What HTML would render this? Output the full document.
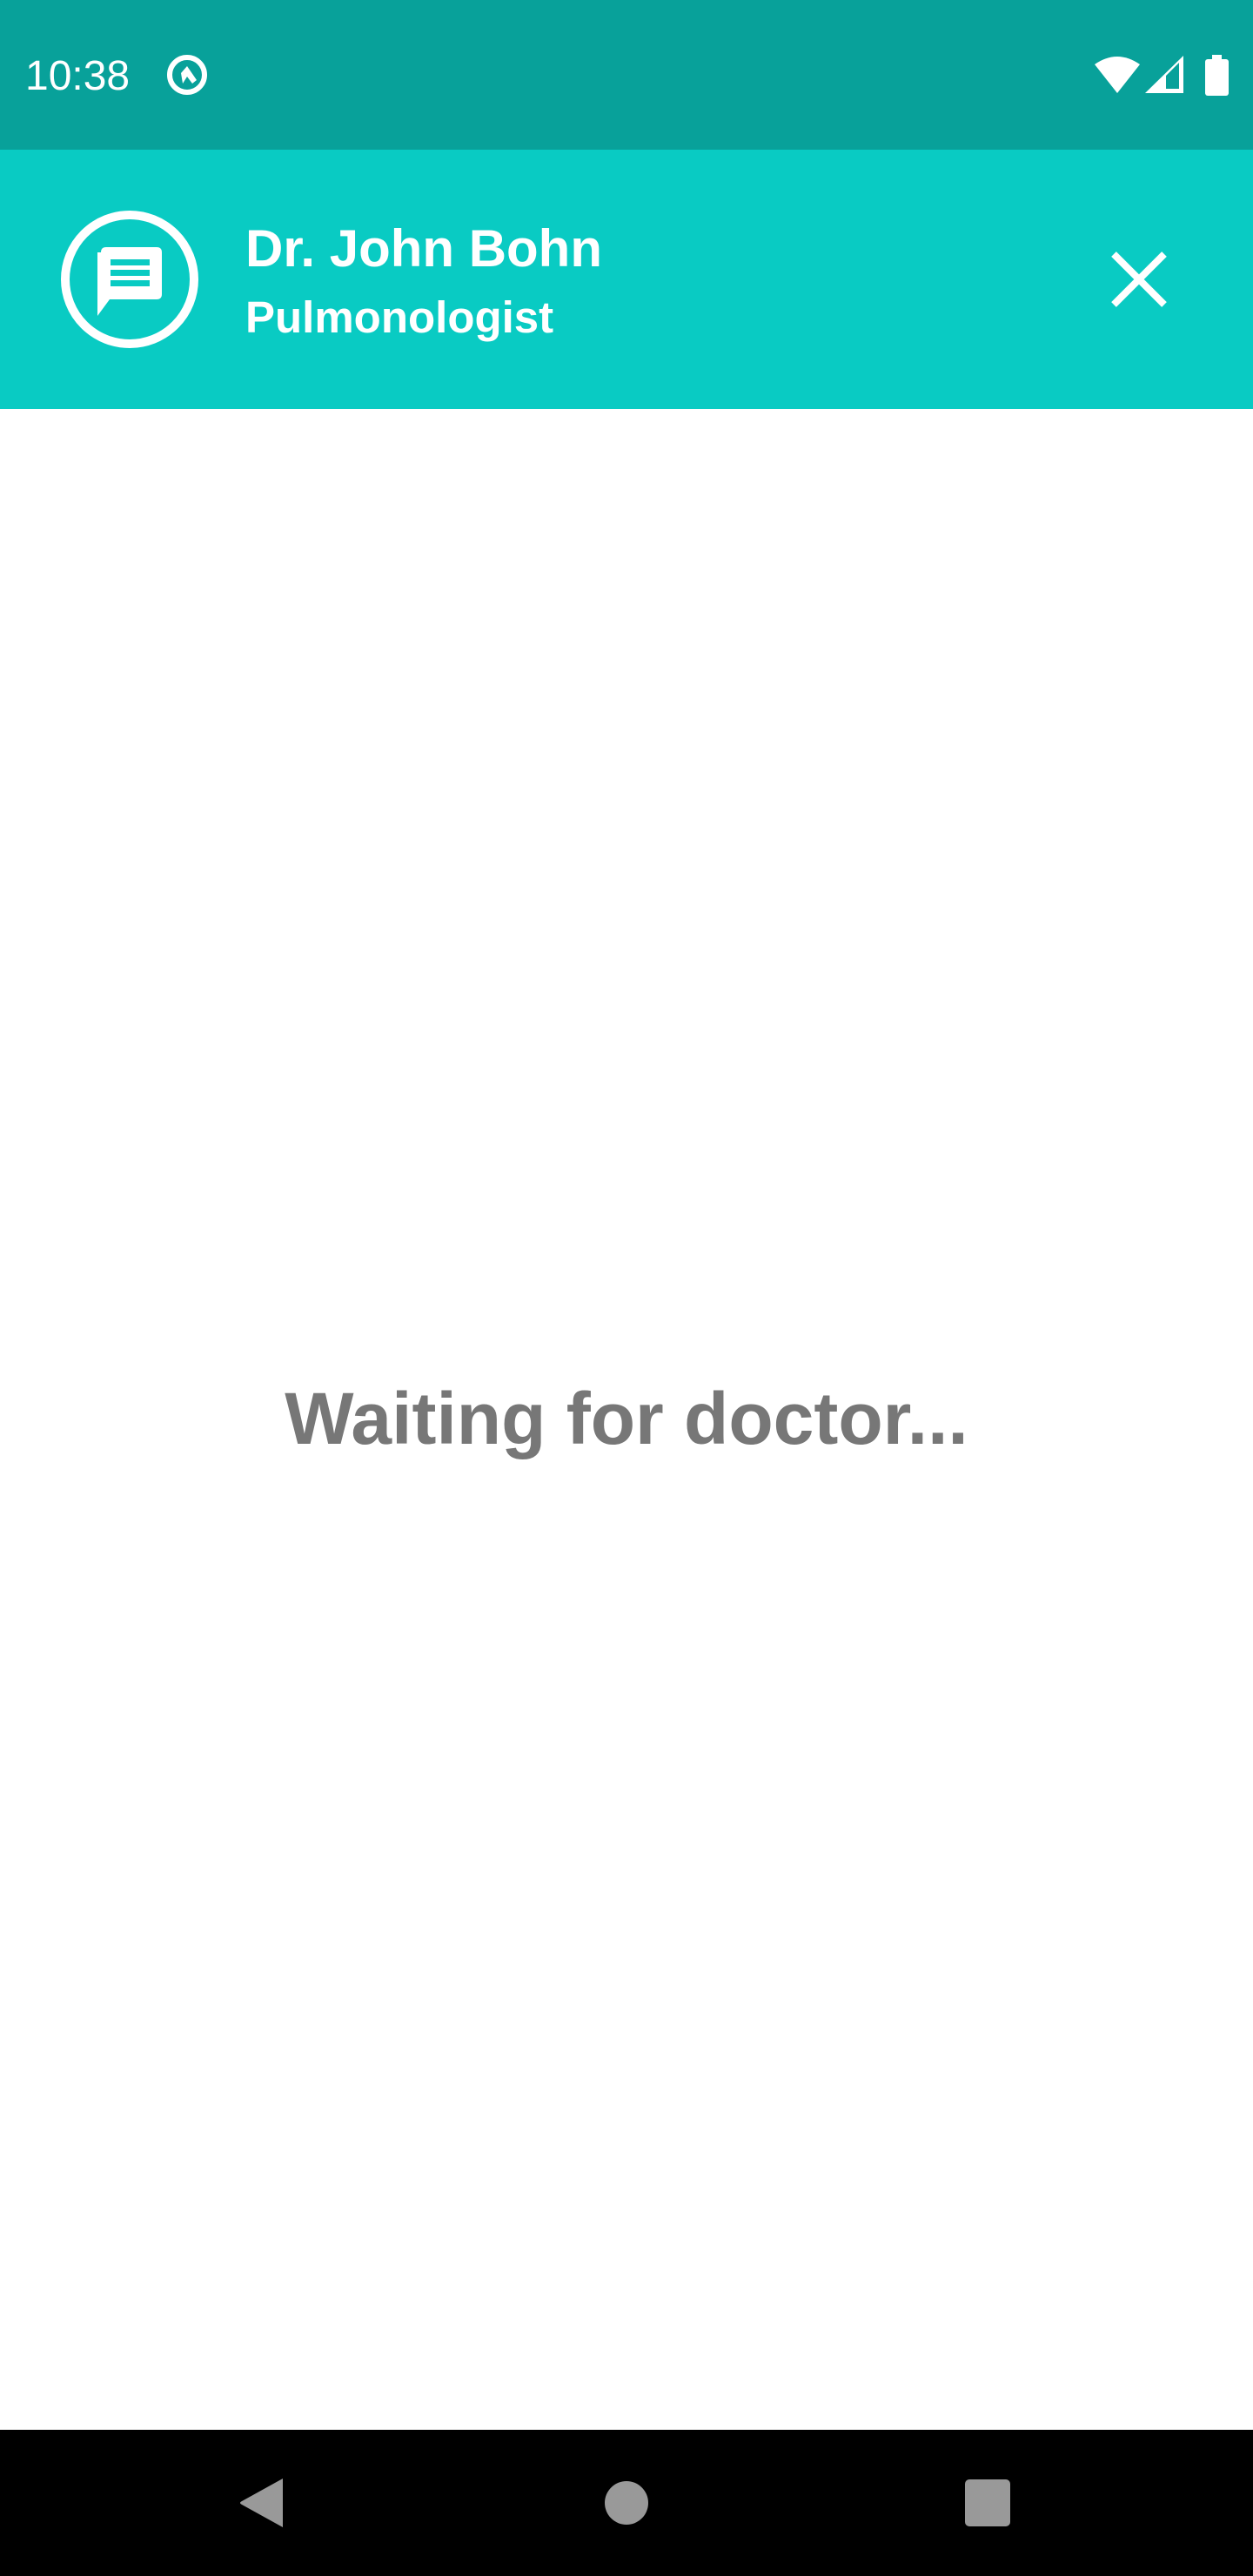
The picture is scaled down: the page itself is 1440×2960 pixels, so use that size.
<!DOCTYPE html>
<html><head><meta charset="utf-8"><style>
html,body{margin:0;padding:0;}
body{width:1440px;height:2960px;position:relative;background:#fff;font-family:"Liberation Sans",sans-serif;overflow:hidden;}
.sb{position:absolute;left:0;top:0;width:1440px;height:172px;background:#08a19a;}
.hd{position:absolute;left:0;top:172px;width:1440px;height:298px;background:#09cbc3;}
.nav{position:absolute;left:0;top:2792px;width:1440px;height:168px;background:#000;}
.t{position:absolute;color:#fff;white-space:nowrap;}
</style></head><body>
<div class="sb"></div>
<div class="t" style="left:29px;top:60px;font-size:48px;line-height:56px;">10:38</div>
<svg style="position:absolute;left:188px;top:58px" width="54" height="56" viewBox="0 0 54 56">
<circle cx="27" cy="28" r="20" fill="none" stroke="#fff" stroke-width="6"/>
<path d="M20 26 L27 18 L38 34 L33 38 L27 30 L22 38 Z" fill="#fff"/>
</svg>
<svg style="position:absolute;left:1256px;top:62px" width="160" height="50" viewBox="0 0 160 50">
<path d="M2 12 Q28 -6 54 12 L28 45 Z" fill="#fff"/>
<path d="M60 45 L104 2 L104 45 Z" fill="#fff"/>
<path d="M84 40 L84 25 L99 10 L99 40 Z" fill="#08a19a"/>
<rect x="129" y="6" width="27" height="42" rx="3" fill="#fff"/>
<rect x="137" y="1" width="11" height="6" fill="#fff"/>
</svg>
<div class="hd"></div>
<svg style="position:absolute;left:68px;top:240px" width="164" height="164" viewBox="0 0 164 164">
<circle cx="81" cy="81" r="74" fill="none" stroke="#fff" stroke-width="10"/>
<path d="M48 50 Q48 44 54 44 L112 44 Q118 44 118 50 L118 98 Q118 104 112 104 L58 104 L44 123 L44 50 Z" fill="#fff"/>
<rect x="59" y="58" width="45" height="7" fill="#09cbc3"/>
<rect x="59" y="70" width="45" height="7" fill="#09cbc3"/>
<rect x="59" y="82" width="45" height="7" fill="#09cbc3"/>
</svg>
<div class="t" style="left:282px;top:248px;font-size:60px;line-height:76px;font-weight:bold;">Dr. John Bohn</div>
<div class="t" style="left:282px;top:333px;font-size:51px;line-height:64px;font-weight:bold;">Pulmonologist</div>
<svg style="position:absolute;left:1272px;top:284px" width="74" height="74" viewBox="0 0 74 74">
<path d="M8 8 L66 66 M66 8 L8 66" stroke="#fff" stroke-width="8"/>
</svg>
<div style="position:absolute;left:0;width:1440px;top:1580px;text-align:center;font-size:84px;line-height:100px;color:#777;font-weight:bold;">Waiting for doctor...</div>
<div class="nav"></div>
<svg style="position:absolute;left:270px;top:2844px" width="60" height="64" viewBox="0 0 60 64">
<path d="M55 4 L55 60 L8 34 Q4 32 8 30 Z" fill="#999"/>
</svg>
<div style="position:absolute;left:695px;top:2851px;width:50px;height:50px;border-radius:50%;background:#999;"></div>
<div style="position:absolute;left:1109px;top:2849px;width:52px;height:54px;border-radius:5px;background:#999;"></div>
</body></html>
